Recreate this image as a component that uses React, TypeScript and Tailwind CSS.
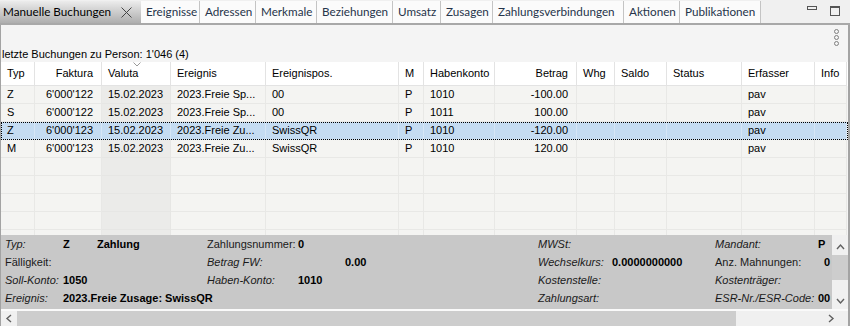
import React from "react";

const COLS =
  "grid grid-cols-[34px_67px_69px_95px_133px_25px_71px_82px_38px_52px_75px_73px_32px]";

const headers: [string, boolean][] = [
  ["Typ", false],
  ["Faktura", true],
  ["Valuta", false],
  ["Ereignis", false],
  ["Ereignispos.", false],
  ["M", false],
  ["Habenkonto", false],
  ["Betrag", true],
  ["Whg", false],
  ["Saldo", false],
  ["Status", false],
  ["Erfasser", false],
  ["Info", false],
];

const rows: string[][] = [
  ["Z", "6'000'122", "15.02.2023", "2023.Freie Sp...", "00", "P", "1010", "-100.00", "", "", "", "pav", ""],
  ["S", "6'000'122", "15.02.2023", "2023.Freie Sp...", "00", "P", "1011", "100.00", "", "", "", "pav", ""],
  ["Z", "6'000'123", "15.02.2023", "2023.Freie Zu...", "SwissQR", "P", "1010", "-120.00", "", "", "", "pav", ""],
  ["M", "6'000'123", "15.02.2023", "2023.Freie Zu...", "SwissQR", "P", "1010", "120.00", "", "", "", "pav", ""],
];

const tabs: [string, string][] = [
  ["Ereignisse", "w-[59px]"],
  ["Adressen", "w-[56px]"],
  ["Merkmale", "w-[61px]"],
  ["Beziehungen", "w-[76px]"],
  ["Umsatz", "w-[48px]"],
  ["Zusagen", "w-[52px]"],
  ["Zahlungsverbindungen", "w-[131px]"],
  ["Aktionen", "w-[56px]"],
  ["Publikationen", "w-[81px]"],
];

function Chevron({ dir }: { dir: "left" | "right" | "up" | "down" }) {
  const d =
    dir === "left"
      ? "M6 1 L2 4.5 L6 8"
      : dir === "right"
      ? "M2 1 L6 4.5 L2 8"
      : dir === "up"
      ? "M1 6 L4.5 2 L8 6"
      : "M1 3 L4.5 7 L8 3";
  return (
    <svg width="9" height="9" viewBox="0 0 9 9">
      <path d={d} fill="none" stroke="#606060" strokeWidth="1.4" />
    </svg>
  );
}

function TabBar() {
  return (
    <div className="h-[25px] shrink-0 flex border-b-2 border-[#a8a8a8] bg-[#f0f0f0] font-['Lato',sans-serif] text-[11.7px]">
      <div className="mt-[1px] h-[22px] w-[141px] flex items-center pl-[3px] bg-linear-to-b from-[#ececec] to-[#aeaeae] text-black">
        <span className="whitespace-nowrap">Manuelle Buchungen</span>
        <svg className="ml-auto mr-[9px]" width="11" height="11" viewBox="0 0 11 11">
          <path d="M0.5 0.5 L10.5 10.5 M10.5 0.5 L0.5 10.5" stroke="#444" strokeWidth="1" />
        </svg>
      </div>
      {tabs.map(([t, w]) => (
        <div
          key={t}
          className={`${w} mt-[1px] h-[22px] flex items-center pl-[5px] bg-[#fbfbfb] border-r border-[#c4c4c4] text-[#26344a] whitespace-nowrap overflow-hidden`}
        >
          {t}
        </div>
      ))}
      <div className="flex-1" />
      <div className="flex items-start pt-[6px] pr-[10px] gap-[13px]">
        <div className="w-[10px] h-[4px] border border-[#555]" />
        <div className="w-[10px] h-[10px] border border-t-2 border-[#555]" />
      </div>
    </div>
  );
}

function Kebab() {
  return (
    <div className="flex flex-col gap-[1px]">
      <div className="w-[5px] h-[5px] rounded-full border border-[#808080]" />
      <div className="w-[5px] h-[5px] rounded-full border border-[#808080]" />
      <div className="w-[5px] h-[5px] rounded-full border border-[#808080]" />
    </div>
  );
}

function Table() {
  const empty = Array.from({ length: 5 });
  return (
    <div className="h-[173px] shrink-0 overflow-hidden">
      <div className={`${COLS} bg-white`}>
        {headers.map(([h, right]) => (
          <div
            key={h}
            className={`relative h-[24px] flex items-center border-r border-b border-[#e3e3e3] whitespace-nowrap ${
              right ? "justify-end pr-[8px]" : "pl-[6px]"
            }`}
          >
            {h}
            {h === "Valuta" && (
              <svg className="absolute top-[0px] left-[31px]" width="8" height="5" viewBox="0 0 8 5">
                <path d="M0.5 0.5 L4 4 L7.5 0.5" fill="none" stroke="#9a9a9a" strokeWidth="1" />
              </svg>
            )}
          </div>
        ))}
      </div>
      {rows.map((r, ri) => {
        const sel = ri === 2;
        return (
          <div
            key={ri}
            className={`${COLS} ${sel ? "outline-1 outline-dotted outline-black -outline-offset-1" : ""}`}
          >
            {r.map((c, ci) => (
              <div
                key={ci}
                className={`h-[18px] flex items-center border-r border-b whitespace-nowrap overflow-hidden ${
                  sel
                    ? "bg-[#c5dcf2] border-[#d6e6f6]"
                    : ci === 2
                    ? "bg-[#ebebe9] border-[#e6e6e4]"
                    : "bg-[#f4f4f2] border-[#e8e8e6]"
                } ${headers[ci][1] ? "justify-end pr-[8px]" : "pl-[6px]"}`}
              >
                {c}
              </div>
            ))}
          </div>
        );
      })}
      {empty.map((_, ri) => (
        <div key={"e" + ri} className={COLS}>
          {headers.map((_h, ci) => (
            <div
              key={ci}
              className={`h-[18px] border-r border-b ${
                ci === 2 ? "bg-[#ebebe9] border-[#e6e6e4]" : "bg-[#f4f4f2] border-[#e8e8e6]"
              }`}
            />
          ))}
        </div>
      ))}
    </div>
  );
}

function Details() {
  const L = "italic text-[#1a1a1a]";
  const N = "text-[#1a1a1a]";
  const B = "font-bold";
  return (
    <div className="h-[74px] shrink-0 flex">
      <div className="flex-1 min-w-0 bg-[#c8c8c8] overflow-hidden whitespace-nowrap">
        <div className="h-[18px] flex items-center pl-[4px]">
          <span className={`w-[58px] shrink-0 ${L}`}>Typ:</span>
          <span className={`w-[34px] shrink-0 ${B}`}>Z</span>
          <span className={`w-[110px] shrink-0 ${B}`}>Zahlung</span>
          <span className={`w-[91px] shrink-0 ${N}`}>Zahlungsnummer:</span>
          <span className={`w-[240px] shrink-0 ${B}`}>0</span>
          <span className={`w-[177px] shrink-0 ${L}`}>MWSt:</span>
          <span className={`w-[103px] shrink-0 ${L}`}>Mandant:</span>
          <span className={`shrink-0 ${B}`}>P</span>
        </div>
        <div className="h-[18px] flex items-center pl-[4px]">
          <span className={`w-[202px] shrink-0 ${N}`}>Fälligkeit:</span>
          <span className={`w-[138px] shrink-0 ${L}`}>Betrag FW:</span>
          <span className={`w-[193px] shrink-0 ${B}`}>0.00</span>
          <span className={`w-[74px] shrink-0 ${L}`}>Wechselkurs:</span>
          <span className={`w-[103px] shrink-0 ${B}`}>0.0000000000</span>
          <span className={`w-[109px] shrink-0 ${N}`}>Anz. Mahnungen:</span>
          <span className={`shrink-0 ${B}`}>0</span>
        </div>
        <div className="h-[18px] flex items-center pl-[4px]">
          <span className={`w-[58px] shrink-0 ${L}`}>Soll-Konto:</span>
          <span className={`w-[144px] shrink-0 ${B}`}>1050</span>
          <span className={`w-[91px] shrink-0 ${L}`}>Haben-Konto:</span>
          <span className={`w-[240px] shrink-0 ${B}`}>1010</span>
          <span className={`w-[177px] shrink-0 ${L}`}>Kostenstelle:</span>
          <span className={`w-[103px] shrink-0 ${L}`}>Kostenträger:</span>
        </div>
        <div className="h-[18px] flex items-center pl-[4px]">
          <span className={`w-[58px] shrink-0 ${L}`}>Ereignis:</span>
          <span className={`w-[475px] shrink-0 ${B}`}>2023.Freie Zusage: SwissQR</span>
          <span className={`w-[177px] shrink-0 ${L}`}>Zahlungsart:</span>
          <span className={`w-[103px] shrink-0 ${L}`}>ESR-Nr./ESR-Code:</span>
          <span className={`shrink-0 ${B}`}>00</span>
        </div>
      </div>
      <div className="w-[16px] shrink-0 bg-[#f0f0f0] flex flex-col">
        <div className="h-[20px] flex items-center justify-center pt-[4px]">
          <Chevron dir="up" />
        </div>
        <div className="h-[25px] bg-[#cdcdcd]" />
        <div className="flex-1" />
        <div className="h-[18px] flex items-center justify-center">
          <Chevron dir="down" />
        </div>
      </div>
    </div>
  );
}

function HScroll() {
  return (
    <div className="flex-1 flex bg-[#f0f0f0] border-t-2 border-[#fafafa]">
      <div className="w-[16px] flex items-center justify-center">
        <Chevron dir="left" />
      </div>
      <div className="w-[719px] bg-[#cdcdcd]" />
      <div className="flex-1" />
      <div className="w-[16px] flex items-center justify-center">
        <Chevron dir="right" />
      </div>
      <div className="w-[9px]" />
    </div>
  );
}

export default function App() {
  return (
    <div className="w-[850px] h-[326px] overflow-hidden bg-[#f0f0f0] flex flex-col font-['Liberation_Sans',Arial,sans-serif] text-[11px] text-black">
      <TabBar />
      <div className="flex-1 min-h-0 flex flex-col border-l border-r-2 border-[#a3a3a3] bg-[#f4f4f4]">
        <div className="h-[37px] shrink-0 flex flex-col">
          <div className="flex justify-end pr-[9px] pt-[4px]">
            <Kebab />
          </div>
          <div className="mt-auto pl-[1px] leading-[13px] pb-[1px] whitespace-nowrap">
            letzte Buchungen zu Person: 1'046 (4)
          </div>
        </div>
        <Table />
        <Details />
        <HScroll />
      </div>
    </div>
  );
}
